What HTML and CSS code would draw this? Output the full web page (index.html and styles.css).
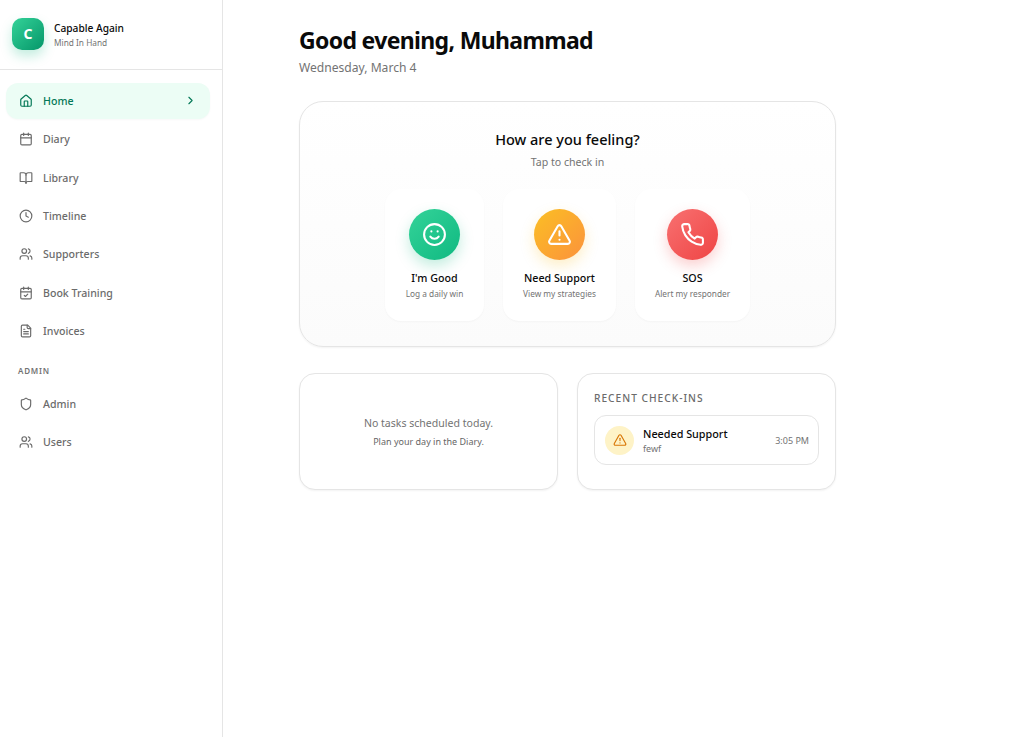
FILE: index.html
```html
<!DOCTYPE html>
<html lang="en">
<head>
  <meta charset="UTF-8">
  <meta name="viewport" content="width=device-width, initial-scale=1.0">
  <title>Capable Again</title>
  <link rel="stylesheet" href="styles.css">
</head>

<body>
  <svg class="defs" aria-hidden="true">
    <symbol id="i-home" viewBox="0 0 24 24"><path d="M15 21v-8a1 1 0 0 0-1-1h-4a1 1 0 0 0-1 1v8"/><path d="M3 10a2 2 0 0 1 .709-1.528l7-5.999a2 2 0 0 1 2.582 0l7 5.999A2 2 0 0 1 21 10v9a2 2 0 0 1-2 2H5a2 2 0 0 1-2-2z"/></symbol>
    <symbol id="i-calendar" viewBox="0 0 24 24"><path d="M8 2v4"/><path d="M16 2v4"/><rect x="3" y="4" width="18" height="18" rx="2"/><path d="M3 10h18"/></symbol>
    <symbol id="i-book" viewBox="0 0 24 24"><path d="M12 7v14"/><path d="M3 18a1 1 0 0 1-1-1V4a1 1 0 0 1 1-1h5a4 4 0 0 1 4 4 4 4 0 0 1 4-4h5a1 1 0 0 1 1 1v13a1 1 0 0 1-1 1h-6a3 3 0 0 0-3 3 3 3 0 0 0-3-3z"/></symbol>
    <symbol id="i-clock" viewBox="0 0 24 24"><circle cx="12" cy="12" r="10"/><path d="M12 6v6l4 2"/></symbol>
    <symbol id="i-users" viewBox="0 0 24 24"><path d="M16 21v-2a4 4 0 0 0-4-4H6a4 4 0 0 0-4 4v2"/><circle cx="9" cy="7" r="4"/><path d="M22 21v-2a4 4 0 0 0-3-3.87"/><path d="M16 3.13a4 4 0 0 1 0 7.75"/></symbol>
    <symbol id="i-calcheck" viewBox="0 0 24 24"><path d="M8 2v4"/><path d="M16 2v4"/><rect x="3" y="4" width="18" height="18" rx="2"/><path d="M3 10h18"/><path d="m9 16 2 2 4-4"/></symbol>
    <symbol id="i-file" viewBox="0 0 24 24"><path d="M15 2H6a2 2 0 0 0-2 2v16a2 2 0 0 0 2 2h12a2 2 0 0 0 2-2V7z"/><path d="M14 2v4a2 2 0 0 0 2 2h4"/><path d="M10 9H8"/><path d="M16 13H8"/><path d="M16 17H8"/></symbol>
    <symbol id="i-shield" viewBox="0 0 24 24"><path d="M20 13c0 5-3.5 7.500-7.660 8.950a1 1 0 0 1-.670-.010C7.500 20.500 4 18 4 13V6a1 1 0 0 1 1-1c2 0 4.500-1.200 6.240-2.720a1.170 1.170 0 0 1 1.520 0C14.510 3.810 17 5 19 5a1 1 0 0 1 1 1z"/></symbol>
    <symbol id="i-alert" viewBox="0 0 24 24"><path d="m21.730 18-8-14a2 2 0 0 0-3.480 0l-8 14A2 2 0 0 0 4 21h16a2 2 0 0 0 1.730-3"/><path d="M12 9v4"/><path d="M12 17h.01"/></symbol>
  </svg>

  <div class="app">
    <!-- Sidebar -->
    <aside class="sidebar">
      <div class="brand">
        <div class="brand-logo">C</div>
        <div>
          <div class="brand-name">Capable Again</div>
          <div class="brand-sub">Mind In Hand</div>
        </div>
      </div>

      <nav class="nav">
        <a class="nav-item active">
          <svg class="nav-icon"><use href="#i-home"/></svg>
          <span>Home</span>
          <svg class="nav-chevron" viewBox="0 0 24 24"><path d="m9 18 6-6-6-6"/></svg>
        </a>
        <a class="nav-item"><svg class="nav-icon"><use href="#i-calendar"/></svg><span>Diary</span></a>
        <a class="nav-item"><svg class="nav-icon"><use href="#i-book"/></svg><span>Library</span></a>
        <a class="nav-item"><svg class="nav-icon"><use href="#i-clock"/></svg><span>Timeline</span></a>
        <a class="nav-item"><svg class="nav-icon"><use href="#i-users"/></svg><span>Supporters</span></a>
        <a class="nav-item"><svg class="nav-icon"><use href="#i-calcheck"/></svg><span>Book Training</span></a>
        <a class="nav-item"><svg class="nav-icon"><use href="#i-file"/></svg><span>Invoices</span></a>
        <div class="nav-label">ADMIN</div>
        <a class="nav-item"><svg class="nav-icon"><use href="#i-shield"/></svg><span>Admin</span></a>
        <a class="nav-item"><svg class="nav-icon"><use href="#i-users"/></svg><span>Users</span></a>
      </nav>
    </aside>

    <!-- Main content -->
    <main class="main">
      <h1 class="greeting">Good evening, Muhammad</h1>
      <p class="date">Wednesday, March 4</p>

      <section class="feeling">
        <h2>How are you feeling?</h2>
        <p class="feeling-sub">Tap to check in</p>
        <div class="options">
          <button class="option option-good">
            <span class="option-circle">
              <svg viewBox="0 0 24 24"><circle cx="12" cy="12" r="10"/><path d="M8 14s1.500 2 4 2 4-2 4-2"/><path d="M9 9h.01"/><path d="M15 9h.01"/></svg>
            </span>
            <span class="option-title">I'm Good</span>
            <span class="option-sub">Log a daily win</span>
          </button>
          <button class="option option-support">
            <span class="option-circle"><svg><use href="#i-alert"/></svg></span>
            <span class="option-title">Need Support</span>
            <span class="option-sub">View my strategies</span>
          </button>
          <button class="option option-sos">
            <span class="option-circle">
              <svg viewBox="0 0 24 24"><path d="M22 16.920v3a2 2 0 0 1-2.180 2 19.790 19.790 0 0 1-8.630-3.070 19.500 19.500 0 0 1-6-6 19.790 19.790 0 0 1-3.070-8.670A2 2 0 0 1 4.110 2h3a2 2 0 0 1 2 1.720 12.840 12.840 0 0 0 .700 2.810 2 2 0 0 1-.450 2.110L8.090 9.910a16 16 0 0 0 6 6l1.270-1.270a2 2 0 0 1 2.110-.450 12.840 12.840 0 0 0 2.810.700A2 2 0 0 1 22 16.920z"/></svg>
            </span>
            <span class="option-title">SOS</span>
            <span class="option-sub">Alert my responder</span>
          </button>
        </div>
      </section>

      <div class="columns">
        <section class="panel panel-empty">
          <p class="empty-title">No tasks scheduled today.</p>
          <p class="empty-sub">Plan your day in the Diary.</p>
        </section>
        <section class="panel panel-recent">
          <h3>RECENT CHECK-INS</h3>
          <div class="checkin">
            <span class="checkin-icon"><svg><use href="#i-alert"/></svg></span>
            <div class="checkin-text">
              <div class="checkin-title">Needed Support</div>
              <div class="checkin-note">fewf</div>
            </div>
            <span class="checkin-time">3:05 PM</span>
          </div>
        </section>
      </div>
    </main>
  </div>
</body>
</html>
```

FILE: styles.css
```css
* { box-sizing: border-box; }
body {
  margin: 0;
  font-family: 'Noto Sans', 'Open Sans', sans-serif;
  background: #fff;
  color: #0a0a0a;
}
.defs { display: none; }
svg {
  fill: none;
  stroke: currentColor;
  stroke-width: 2;
  stroke-linecap: round;
  stroke-linejoin: round;
}
.app {
  display: flex;
  min-height: 737px;
}

/* sidebar */
.sidebar {
  width: 223px;
  flex-shrink: 0;
  border-right: 1px solid #e5e5e5;
}
.brand {
  height: 70px;
  display: flex;
  align-items: center;
  gap: 10px;
  padding: 0 12px 2px;
  border-bottom: 1px solid #e5e5e5;
}
.brand-logo {
  width: 32px;
  height: 32px;
  border-radius: 10px;
  display: flex;
  align-items: center;
  justify-content: center;
  color: #fff;
  font-size: 14px;
  font-weight: 700;
  background: linear-gradient(135deg, #34d399, #059669);
  box-shadow: 0 6px 12px rgba(16, 185, 129, .25);
}
.brand-name {
  font-size: 10.2px;
  font-weight: 500;
  line-height: 16px;
  margin-top: 1px;
}
.brand-sub {
  font-size: 8.3px;
  line-height: 13px;
  color: #737373;
}
.nav {
  display: flex;
  flex-direction: column;
  gap: 2.33px;
  padding: 12.9px 12px 0 6px;
}
.nav-item {
  height: 36px;
  display: flex;
  align-items: center;
  gap: 10px;
  padding: 0 13px;
  border-radius: 12px;
  font-size: 10.6px;
  font-weight: 500;
  color: #6b6b6b;
}
.nav-item.active {
  background: #ecfdf5;
  color: #047857;
  box-shadow: 0 1px 2px rgba(0, 0, 0, .03);
}
.nav-icon {
  width: 14px;
  height: 14px;
  stroke-width: 2;
  flex-shrink: 0;
}
.nav-chevron {
  width: 13px;
  height: 13px;
  margin-left: auto;
  margin-right: 0;
}
.nav-label {
  font-size: 8px;
  font-weight: 600;
  letter-spacing: .8px;
  color: #737373;
  padding: 14px 12px 6px;
  line-height: 12px;
}

/* main */
.main {
  width: 537px;
  margin-left: 76px;
  padding-top: 24px;
}
.greeting {
  margin: 0;
  font-size: 23px;
  font-weight: 700;
  line-height: 32px;
  letter-spacing: -.66px;
}
.date {
  margin: 3px 0 0;
  font-size: 12.1px;
  line-height: 18px;
  color: #737373;
}
.feeling {
  height: 246px;
  margin-top: 24px;
  padding-top: 26px;
  border: 1px solid #e5e5e5;
  border-radius: 24px;
  background: linear-gradient(to bottom, #fff, #fbfbfb);
  box-shadow: 0 1px 2px rgba(0, 0, 0, .05);
  text-align: center;
}
.feeling h2 {
  margin: 0;
  font-size: 14.5px;
  font-weight: 500;
  line-height: 22px;
}
.feeling-sub {
  margin: 4px 0 0;
  font-size: 10.6px;
  line-height: 16px;
  color: #737373;
}
.options {
  display: flex;
  justify-content: center;
  gap: 19px;
  margin-top: 19px;
}
.option {
  height: 132px;
  padding: 20px 0 0;
  display: flex;
  flex-direction: column;
  align-items: center;
  border: none;
  border-radius: 16px;
  background: #fff;
  box-shadow: 0 1px 2px rgba(0, 0, 0, .03);
  font-family: inherit;
  color: inherit;
}
.option-good { width: 99px; }
.option-support { width: 113px; }
.option-sos { width: 115px; }
.option-circle {
  width: 51px;
  height: 51px;
  border-radius: 50%;
  display: flex;
  align-items: center;
  justify-content: center;
  color: #fff;
}
.option-circle svg {
  width: 25px;
  height: 25px;
}
.option-good .option-circle {
  background: linear-gradient(135deg, #34d399, #10b981);
  box-shadow: 0 6px 14px rgba(16, 185, 129, .25);
}
.option-support .option-circle {
  background: linear-gradient(135deg, #fbbf24, #fb923c);
  box-shadow: 0 6px 14px rgba(251, 191, 36, .25);
}
.option-sos .option-circle {
  background: linear-gradient(135deg, #f87171, #ef4444);
  box-shadow: 0 6px 14px rgba(239, 68, 68, .25);
}
.option-title {
  margin-top: 10px;
  font-size: 10.7px;
  font-weight: 500;
  line-height: 16px;
}
.option-sub {
  margin-top: 1px;
  font-size: 8.3px;
  line-height: 13px;
  color: #737373;
}
.columns {
  display: flex;
  gap: 19px;
  margin-top: 26px;
}
.panel {
  width: 259px;
  height: 117px;
  border: 1px solid #e5e5e5;
  border-radius: 16px;
  background: #fff;
  box-shadow: 0 1px 2px rgba(0, 0, 0, .05);
}
.panel-empty {
  display: flex;
  flex-direction: column;
  align-items: center;
  justify-content: center;
}
.empty-title {
  margin: 0;
  font-size: 10.55px;
  line-height: 16px;
  color: #737373;
}
.empty-sub {
  margin: 4px 0 0;
  font-size: 9px;
  line-height: 14px;
  color: #666;
}
.panel-recent { padding: 16px; }
.panel-recent h3 {
  margin: 0;
  font-size: 10.2px;
  font-weight: 500;
  letter-spacing: 1px;
  line-height: 16px;
  color: #6b6b6b;
}
.checkin {
  height: 50px;
  margin-top: 9px;
  display: flex;
  align-items: center;
  gap: 9px;
  padding: 0 9px 0 10px;
  border: 1px solid #e5e5e5;
  border-radius: 12px;
}
.checkin-icon {
  width: 29px;
  height: 29px;
  border-radius: 50%;
  background: #fef3c7;
  color: #d97706;
  display: flex;
  align-items: center;
  justify-content: center;
}
.checkin-icon svg {
  width: 14px;
  height: 14px;
}
.checkin-text { flex: 1; }
.checkin-title {
  font-size: 10.8px;
  font-weight: 500;
  line-height: 16px;
}
.checkin-note {
  font-size: 9px;
  line-height: 13px;
  color: #737373;
}
.checkin-time {
  font-size: 9px;
  color: #737373;
}
```
